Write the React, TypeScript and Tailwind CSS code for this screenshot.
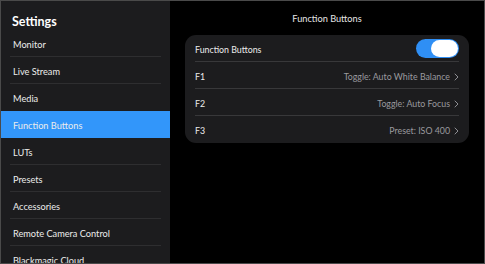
const menu = [
  "Monitor",
  "Live Stream",
  "Media",
  "Function Buttons",
  "LUTs",
  "Presets",
  "Accessories",
  "Remote Camera Control",
  "Blackmagic Cloud",
];

const buttons = [
  { key: "F1", value: "Toggle: Auto White Balance" },
  { key: "F2", value: "Toggle: Auto Focus" },
  { key: "F3", value: "Preset: ISO 400" },
];

function Chevron() {
  return (
    <svg width="5" height="8" viewBox="0 0 5 8" fill="none" className="ml-[4px]">
      <path d="M1 1 L4 4 L1 7" stroke="#8e8e93" strokeWidth="1" strokeLinecap="round" strokeLinejoin="round" />
    </svg>
  );
}

export default function App() {
  return (
    <div
      className="w-[485px] h-[264px] border border-[#4a4a4a] bg-black flex overflow-hidden text-white"
      style={{ fontFamily: "Lato, 'Noto Sans', sans-serif" }}
    >
      <aside className="w-[169px] shrink-0 bg-[#1c1c1e] flex flex-col">
        <h1 className="h-[33px] pt-[13px] pl-[11px] text-[12.5px] font-bold leading-[16px]">Settings</h1>
        <ul className="flex flex-col">
          {menu.map((item, i) => {
            const active = item === "Function Buttons";
            const next = menu[i + 1] === "Function Buttons";
            return (
              <li
                key={item}
                className={`h-[27px] shrink-0 flex flex-col ${active ? "bg-[#3296fa]" : ""}`}
              >
                <div className="flex-1 flex items-center pt-[3px] pl-[12px] text-[9.2px] text-[#ececec]">{item}</div>
                {!active && !next && <div className="ml-[9px] mr-[9px] h-px bg-[#2e2e30]" />}
              </li>
            );
          })}
        </ul>
      </aside>
      <main className="flex-1 flex flex-col">
        <div className="h-[34px] pt-[12px] text-center text-[9.2px] leading-[12px] text-[#e6e6e6]">Function Buttons</div>
        <section className="mx-[15px] rounded-[11px] bg-[#1c1c1e] px-[10px]">
          <div className="h-[27px] flex items-center justify-between border-b border-[#38383a]">
            <span className="pt-[3px] text-[8.8px] text-[#ececec]">Function Buttons</span>
            <span className="w-[43px] h-[19px] rounded-full bg-[#2f8ff5] flex items-center justify-end pr-[1px]">
              <span className="w-[27px] h-[17px] rounded-full bg-white" />
            </span>
          </div>
          {buttons.map((b, i) => (
            <div
              key={b.key}
              className={`h-[27px] pt-[3px] flex items-center justify-between ${i < buttons.length - 1 ? "border-b border-[#38383a]" : ""}`}
            >
              <span className="text-[8.8px] text-[#ececec]">{b.key}</span>
              <span className="flex items-center text-[8.8px] text-[#9a9a9e]">
                {b.value}
                <Chevron />
              </span>
            </div>
          ))}
        </section>
      </main>
    </div>
  );
}
